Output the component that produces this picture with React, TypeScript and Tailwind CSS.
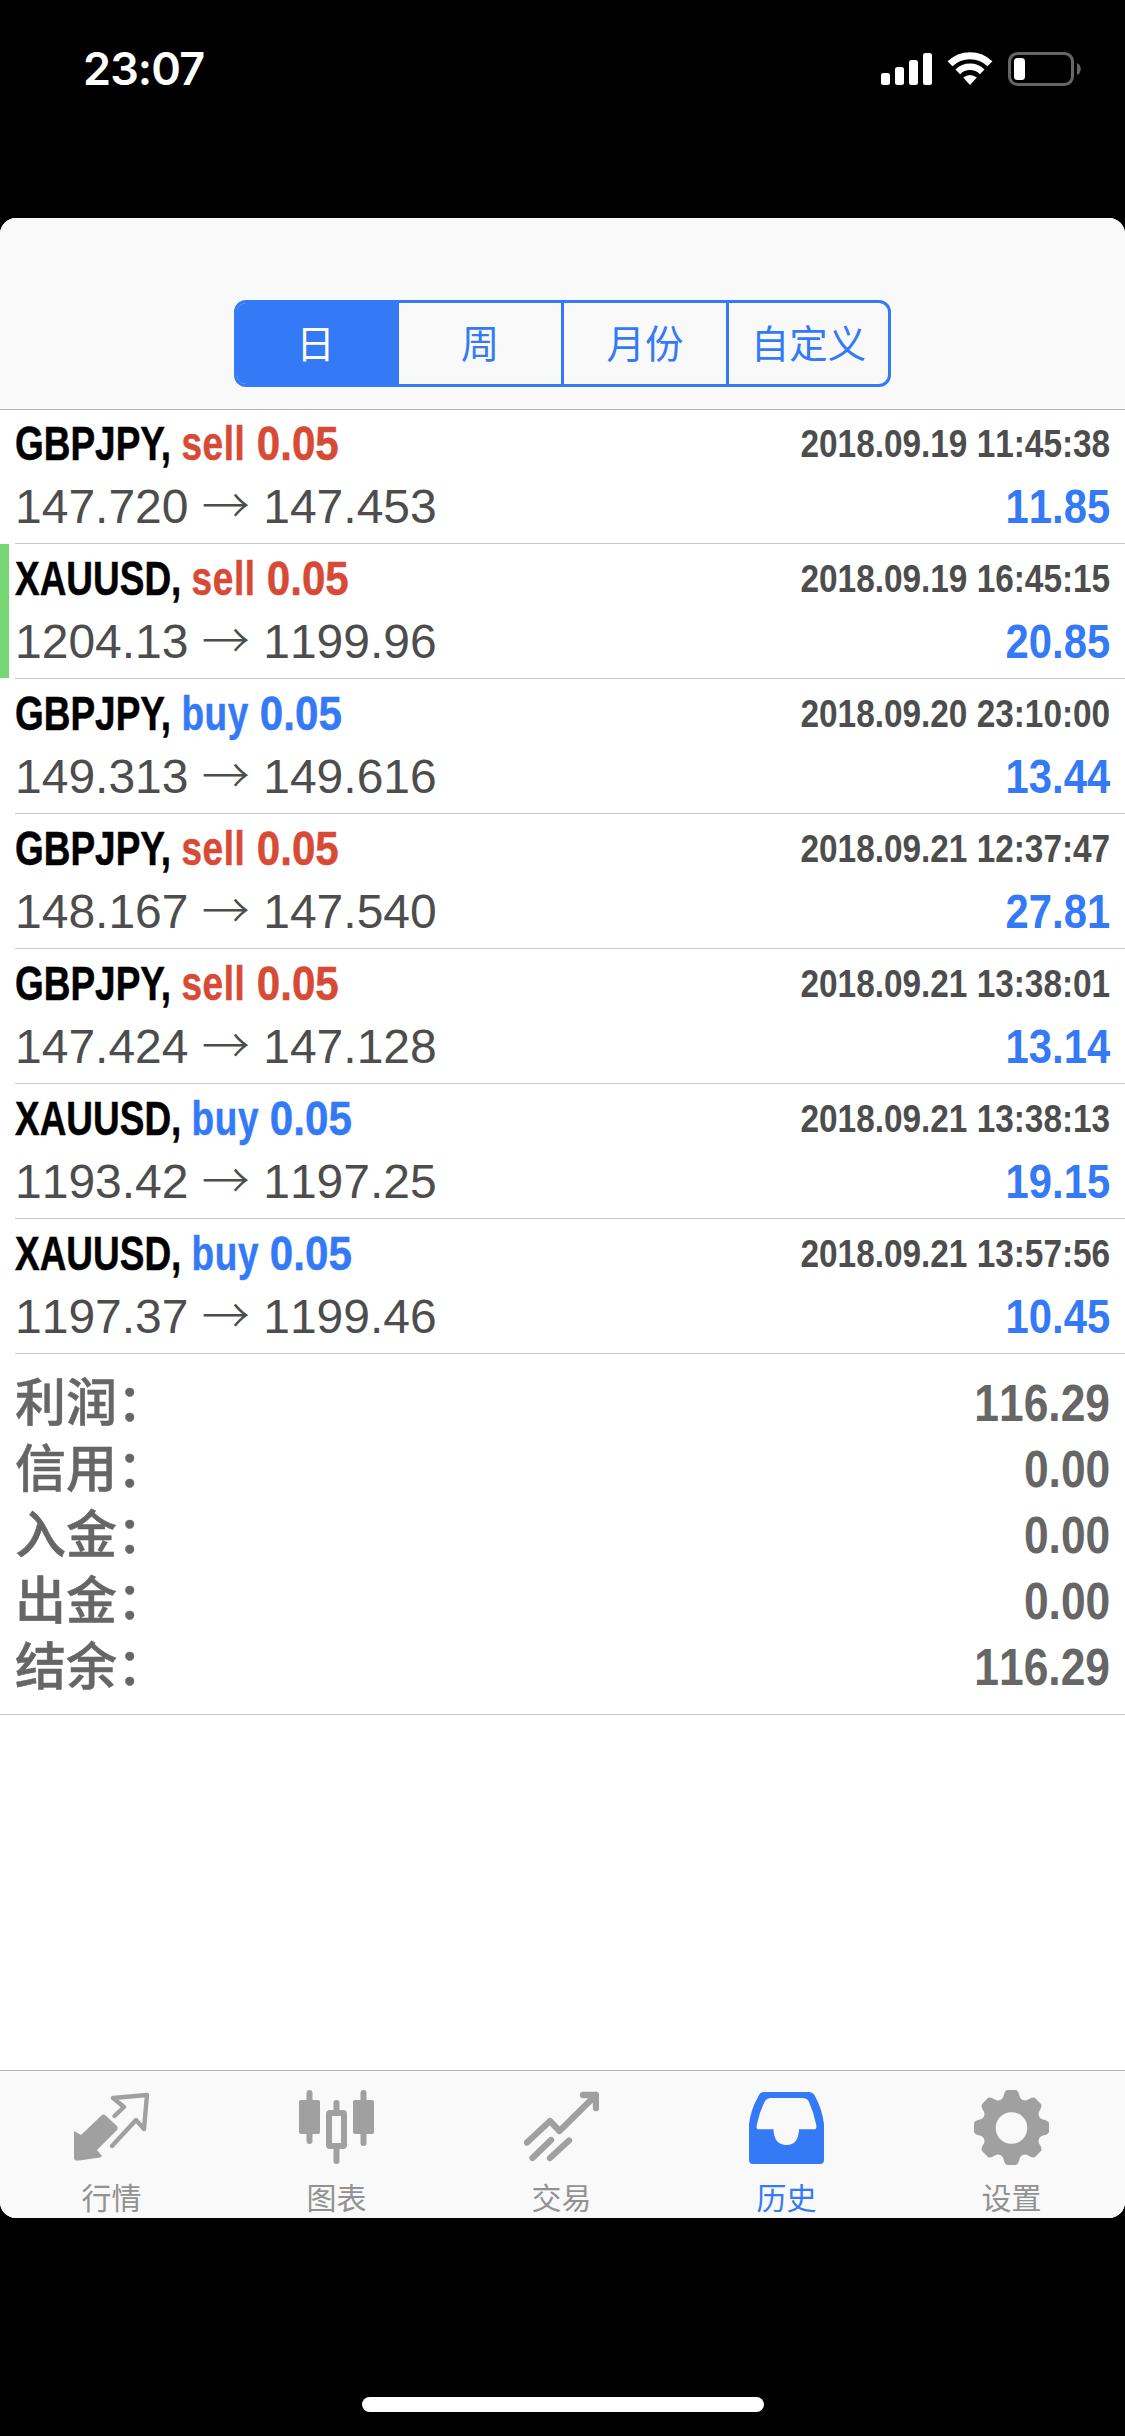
import React from "react";

const deals = [
    { symbol: 'GBPJPY', type: 'sell', volume: '0.05', open: '147.720', close: '147.453', time: '2018.09.19 11:45:38', profit: '11.85' },
    { symbol: 'XAUUSD', type: 'sell', volume: '0.05', open: '1204.13', close: '1199.96', time: '2018.09.19 16:45:15', profit: '20.85', marked: true },
    { symbol: 'GBPJPY', type: 'buy', volume: '0.05', open: '149.313', close: '149.616', time: '2018.09.20 23:10:00', profit: '13.44' },
    { symbol: 'GBPJPY', type: 'sell', volume: '0.05', open: '148.167', close: '147.540', time: '2018.09.21 12:37:47', profit: '27.81' },
    { symbol: 'GBPJPY', type: 'sell', volume: '0.05', open: '147.424', close: '147.128', time: '2018.09.21 13:38:01', profit: '13.14' },
    { symbol: 'XAUUSD', type: 'buy', volume: '0.05', open: '1193.42', close: '1197.25', time: '2018.09.21 13:38:13', profit: '19.15' },
    { symbol: 'XAUUSD', type: 'buy', volume: '0.05', open: '1197.37', close: '1199.46', time: '2018.09.21 13:57:56', profit: '10.45' },
]

const summary = [
    { label: '利润', value: '116.29' },
    { label: '信用', value: '0.00' },
    { label: '入金', value: '0.00' },
    { label: '出金', value: '0.00' },
    { label: '结余', value: '116.29' },
]

const StatusBar = () => (
    <div className="flex h-[218px] items-start justify-between pl-[83px] pr-[43px] text-white">
        <span className="mt-[41px] font-['Inter'] text-[45px] leading-[56px] font-semibold tracking-[-0.9px]">23:07</span>
        <div className="mt-[52px] flex items-start gap-[15px]">
            <svg width="51" height="33" viewBox="0 0 51 33" fill="white">
                <rect x="0" y="21" width="9" height="12" rx="2.5" />
                <rect x="14" y="15" width="9" height="18" rx="2.5" />
                <rect x="28" y="8" width="9" height="25" rx="2.5" />
                <rect x="42" y="1" width="9" height="32" rx="2.5" />
            </svg>
            <svg width="46" height="33" viewBox="0 0 46 33" fill="none" stroke="white">
                <path d="M3 11.8A28.6 28.6 0 0 1 43 11.8" strokeWidth="7" />
                <path d="M10.8 19.8A17.4 17.4 0 0 1 35.2 19.8" strokeWidth="6.6" />
                <path d="M16.2 25.6Q23 20.4 29.8 25.6L23 33Z" fill="white" stroke="none" />
            </svg>
            <svg width="74" height="34" viewBox="0 0 74 34">
                <rect x="1.5" y="1.5" width="63" height="31" rx="8" fill="none" stroke="#666" strokeWidth="3" />
                <rect x="6" y="6" width="11" height="22" rx="3.5" fill="white" />
                <path d="M69 11C74 13 74 21 69 23Z" fill="#666" />
            </svg>
        </div>
    </div>
)

const PeriodPicker = () => (
    <div className="flex h-[192px] shrink-0 justify-center border-b border-[#b2b2b2] bg-[#f9f9f9] pt-[82px]">
        <div className="flex h-[87px] w-[657px] overflow-hidden rounded-[12px] border-3 border-[#347af6] text-[38.5px] text-[#347af6]">
            <div className="flex w-[162px] items-center justify-center bg-[#347af6] pt-[3px] pr-[5px] text-white">日</div>
            <div className="flex w-[162px] items-center justify-center pt-[3px]">周</div>
            <div className="flex w-[165px] items-center justify-center border-l-3 pt-[3px]">月份</div>
            <div className="flex w-[162px] items-center justify-center border-l-3 pt-[3px]">自定义</div>
        </div>
    </div>
)

const DealRow = ({ deal }: { deal: typeof deals[number] }) => (
    <div className="h-[135px]">
        <div className={`flex h-[134px] flex-col border-l-[9px] pt-[6px] pr-[15px] pl-[6px] ${deal.marked ? 'border-[#76d672]' : 'border-transparent'}`}>
            <div className="flex h-[63px] items-start justify-between font-bold whitespace-pre">
                <span className="origin-left scale-x-[.77] text-[48px] leading-[58px] text-black [-webkit-text-stroke:0.5px]">
                    {deal.symbol}, <span className={deal.type === 'sell' ? 'text-[#d64a36]' : 'text-[#347af6]'}><span className="tracking-[0.8px]">{deal.type}</span> <span className="ml-px inline-block origin-left scale-x-[1.14]">{deal.volume}</span></span>
                </span>
                <span className="origin-right scale-x-[.855] text-[39px] leading-[57px] text-[#4d4d4d] [font-kerning:none]">{deal.time}</span>
            </div>
            <div className="flex items-baseline justify-between text-[48px] leading-[58px] [font-kerning:none]">
                <span className="text-[#4d4d4d]">{deal.open} <span className="font-['Noto_Sans_CJK_SC'] leading-none font-light">→</span> {deal.close}</span>
                <span className="origin-right scale-x-[.87] font-bold text-[#347af6]">{deal.profit}</span>
            </div>
        </div>
        <div className="ml-[15px] h-px bg-[#c8c8c8]" />
    </div>
)

const Summary = () => (
    <div className="h-[361px] border-b border-[#c8c8c8] px-[15px] pt-[17px] text-[51px] text-[#666]">
        {summary.map((item) => (
            <div key={item.label} className="flex h-[66px] items-baseline justify-between leading-[66px]">
                <span className="font-medium [-webkit-text-stroke:0.5px]">{item.label}：</span>
                <span className="origin-right scale-x-[.87] font-bold [font-kerning:none]">{item.value}</span>
            </div>
        ))}
    </div>
)

const icons = {
    quotes: (
        <>
            <path d="M0 41L7 45L28 25Q29.5 24 31 25L43 36Q44.5 38 43 40L23 60L28 66L26 67.5L5 70.5Q0 71 0 68Z" fill="currentColor" />
            <path d="M40.5 26L50 17L39 8L73 5L70 39L62 30L38 56" fill="none" stroke="currentColor" strokeWidth="4.4" strokeLinecap="round" strokeLinejoin="round" />
        </>
    ),
    chart: (
        <>
            <path d="M10.5 3V51M64.5 3V53M37.5 13V22M37.5 58V71" stroke="currentColor" strokeWidth="6" strokeLinecap="round" />
            <rect x="0" y="10" width="21" height="34" rx="2" fill="currentColor" />
            <rect x="54" y="10" width="21" height="34" rx="2" fill="currentColor" />
            <rect x="30" y="23" width="15" height="33" rx="1" fill="none" stroke="currentColor" strokeWidth="6" />
        </>
    ),
    trade: (
        <path d="M3 52.5L26 31L35.5 41L72 5M59 5H72V18M8.5 68L27 50M26 68L45 50.5" fill="none" stroke="currentColor" strokeWidth="6.3" strokeLinecap="round" strokeLinejoin="round" />
    ),
    history: (
        <path fillRule="evenodd" d="M15 2H59.5Q64 2 66 6Q73 19 75 34V70Q75 74 71 74H4Q0 74 0 70V34Q2 19 9.5 6Q11 2 15 2ZM22 8Q17.5 8 15.5 12Q10.5 22 8 34Q6.5 39.3 10 39.3H24.5Q25 55 37.5 55Q49.5 55 50 39.3H65Q68.5 39.3 67 34Q64.5 22 60 12Q58.5 8 53 8Z" fill="currentColor" />
    ),
    settings: (
        <>
            <circle cx="37.5" cy="37.5" r="29.5" fill="currentColor" />
            {[0, 45, 90, 135, 180, 225, 270, 315].map((angle) => (
                <path key={angle} transform={`rotate(${angle} 37.5 37.5)`} d="M24 11Q28.5 10 29.5 6Q30.5 1 33 0H42Q44.5 1 45.5 6Q46.5 10 51 11L50 20H25Z" fill="currentColor" />
            ))}
            <circle cx="37.5" cy="38" r="15.8" fill="#f9f9f9" />
        </>
    ),
}

const tabs = [
    { label: '行情', icon: icons.quotes },
    { label: '图表', icon: icons.chart },
    { label: '交易', icon: icons.trade },
    { label: '历史', icon: icons.history, active: true },
    { label: '设置', icon: icons.settings },
]

const TabBar = () => (
    <div className="flex h-[148px] border-t border-[#b2b2b2] bg-[#f9f9f9]">
        {tabs.map((tab) => (
            <div key={tab.label} className={`flex flex-1 flex-col items-center pt-[19px] pr-[2px] ${tab.active ? 'text-[#347af6]' : 'text-[#a0a0a0]'}`}>
                <svg className="shrink-0" width="75" height="75" viewBox="0 0 75 75">{tab.icon}</svg>
                <span className={`mt-[13px] text-[30px] leading-[42px] ${tab.active ? '' : 'text-[#929292]'}`}>{tab.label}</span>
            </div>
        ))}
    </div>
)

const App = () => (
    <div className="flex h-[2436px] w-[1125px] flex-col bg-black font-['Liberation_Sans','Noto_Sans_CJK_SC',sans-serif]">
        <StatusBar />
        <div className="flex h-[2000px] flex-col overflow-hidden rounded-[16px] bg-white">
            <PeriodPicker />
            <div className="-mt-px">
                {deals.map((deal) => <DealRow key={deal.time} deal={deal} />)}
            </div>
            <Summary />
            <div className="flex-1" />
            <TabBar />
        </div>
        <div className="flex flex-1 items-end justify-center pb-[24px]">
            <div className="h-[15px] w-[402px] rounded-full bg-white" />
        </div>
    </div>
)

export default App
